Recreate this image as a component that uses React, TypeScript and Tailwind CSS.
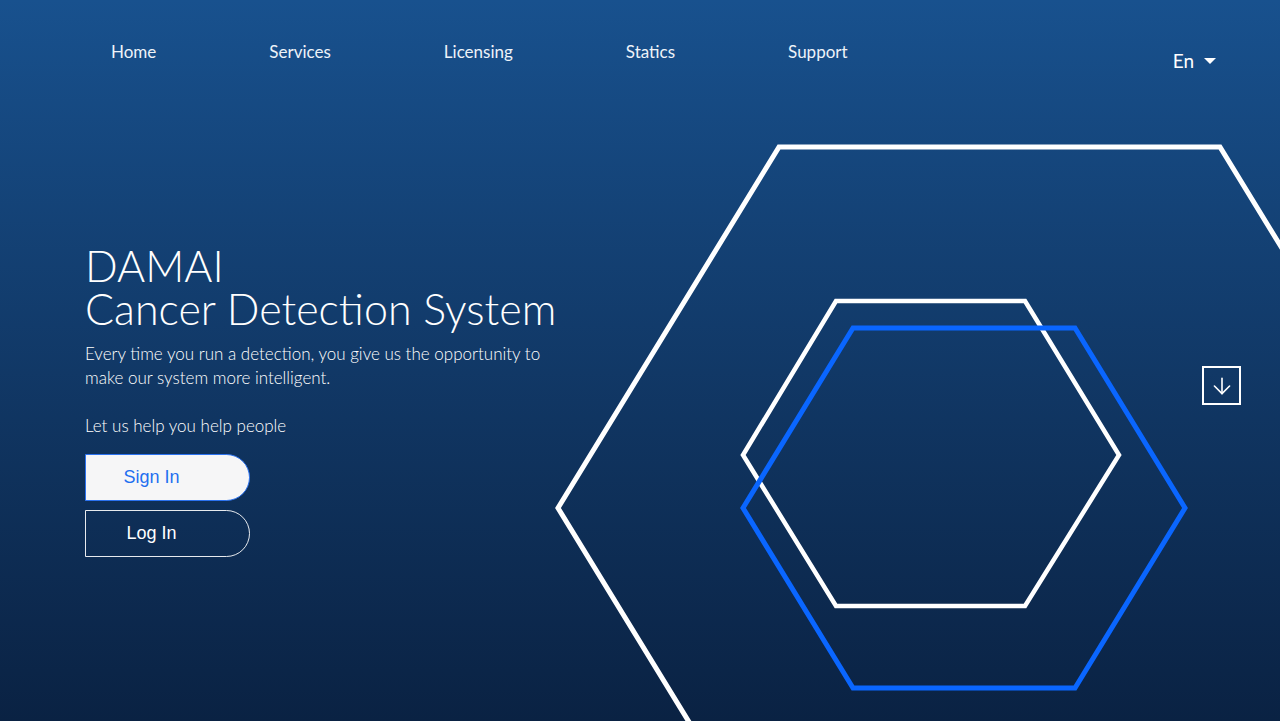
import { ArrowDown } from "lucide-react";

const navItems = ["Home", "Services", "Licensing", "Statics", "Support"];

function Hexagons() {
  return (
    <svg
      className="pointer-events-none absolute inset-0 h-full w-full"
      viewBox="0 0 1280 721"
      fill="none"
      aria-hidden="true"
    >
      <polygon
        points="779,147 1220,147 1441,508 1220,869 779,869 558,508"
        stroke="#ffffff"
        strokeWidth="5"
        strokeLinejoin="miter"
      />
      <polygon
        points="836,301 1025,301 1119,455 1025,606 836,606 743,455"
        stroke="#ffffff"
        strokeWidth="4.5"
      />
      <polygon
        points="853,328 1075,328 1185,508 1075,688 853,688 743,508"
        stroke="#0a66ff"
        strokeWidth="5"
      />
    </svg>
  );
}

export default function App() {
  return (
    <div
      className="relative h-[721px] w-[1280px] overflow-hidden bg-gradient-to-b from-[#18518e] to-[#0a2243] text-white"
      style={{ fontFamily: "Lato, 'Open Sans', sans-serif" }}
    >
      <Hexagons />

      {/* Header */}
      <header className="relative flex items-start justify-between pl-[111px] pr-[64px] pt-[40px]">
        <nav className="flex gap-[113px] text-[17px] leading-[24px] text-[#eef3f9]">
          {navItems.map((item) => (
            <a key={item} href="#">
              {item}
            </a>
          ))}
        </nav>
        <button className="mt-[9px] flex items-center gap-[10px] text-[19px] leading-[24px] text-white">
          <span>En</span>
          <span className="h-0 w-0 border-x-[6px] border-t-[6px] border-x-transparent border-t-white" />
        </button>
      </header>

      {/* Hero */}
      <main className="relative flex items-start justify-between pl-[85px] pr-[39px] pt-[171px]">
        <div className="flex flex-col">
          <h1 className="text-[43px] font-light leading-[43px]">
            <span className="block">DAMAI</span>
            <span className="block">Cancer Detection System</span>
          </h1>
          <p className="mt-[12px] w-[470px] text-[17px] font-light leading-[24px]">
            Every time you run a detection, you give us the opportunity to make our system more
            intelligent.
          </p>
          <p className="mt-[24px] text-[17px] font-light leading-[24px]">Let us help you help people</p>

          <div className="mt-[16px] flex flex-col gap-[9px]" style={{ fontFamily: "'Liberation Sans', Arial, sans-serif" }}>
            <button className="h-[47px] w-[165px] rounded-r-full border border-[#2b72f0] bg-[#f6f6f7] pr-[32px] text-[18px] text-[#1f6ff0]">
              Sign In
            </button>
            <button className="h-[47px] w-[165px] rounded-r-full border border-white/90 pr-[32px] text-[18px] text-white">
              Log In
            </button>
          </div>
        </div>

        <button className="mt-[122px] flex h-[39px] w-[39px] items-center justify-center border-2 border-white">
          <ArrowDown className="h-[26px] w-[26px]" strokeWidth={1.5} />
        </button>
      </main>
    </div>
  );
}
